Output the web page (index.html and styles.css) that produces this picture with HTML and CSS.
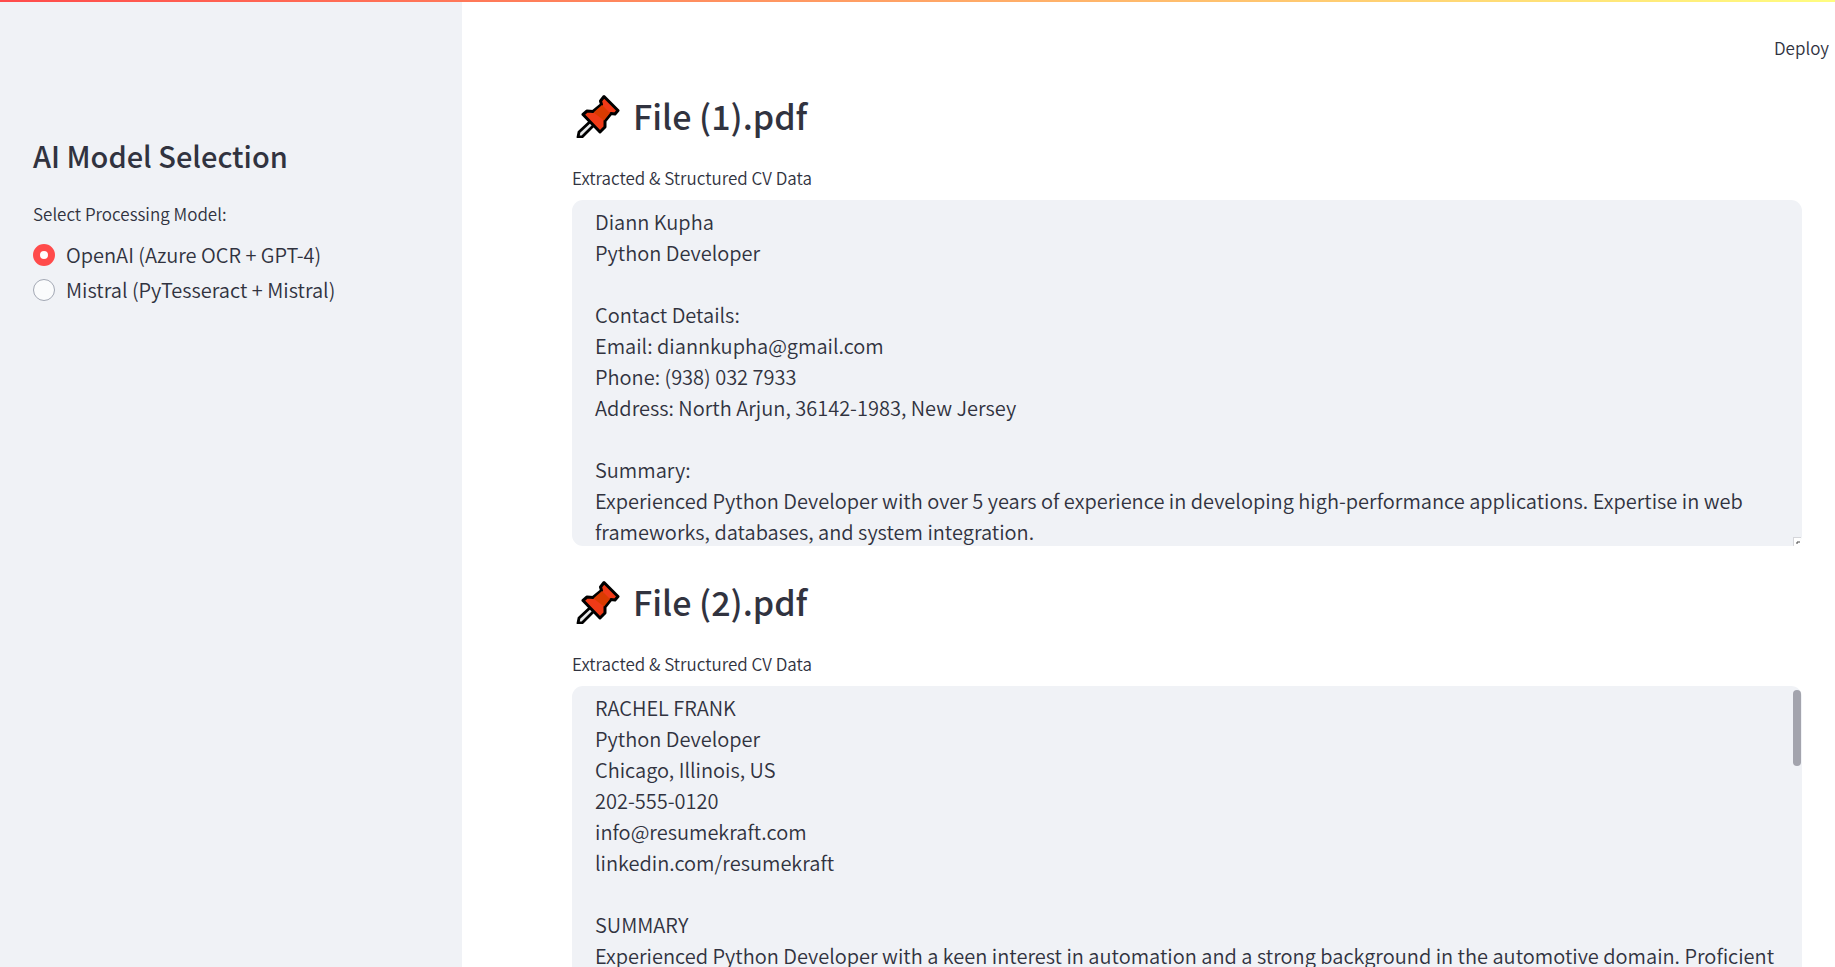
FILE: index.html
```html
<!DOCTYPE html>
<html lang="en">
<head>
<meta charset="utf-8">
<title>CV Extraction</title>
<link rel="stylesheet" href="styles.css">
</head>
<body>
<svg class="defs" aria-hidden="true">
  <symbol id="pin" viewBox="0 0 44 44">
    <path d="M18 24 L3 38 L2 43 L6 43 L21 28" fill="#e6e7e8" stroke="#000" stroke-width="2.8" stroke-linejoin="round"/>
    <path d="M28 2.500 L24.500 7 L25.500 10.500 L17 17.500 L11 17 L7 20.500 L24 38 L29 33 L29 27 L35 19.500 L39 20 L42 16.500 Z" fill="#f03a17" stroke="#000" stroke-width="3" stroke-linejoin="round"/>
    <path d="M26 11 L34 19 L28 26.500 L17.500 18.500 Z" fill="#da3b01"/>
  </symbol>
</svg>
<div class="decoration"></div>
<div class="app">
  <aside class="sidebar">
    <h2 class="sidebar-title">AI Model Selection</h2>
    <fieldset class="models">
      <legend class="caption">Select Processing Model:</legend>
      <label class="option"><input class="radio" type="radio" name="model" checked>OpenAI (Azure OCR + GPT-4)</label>
      <label class="option"><input class="radio" type="radio" name="model">Mistral (PyTesseract + Mistral)</label>
    </fieldset>
  </aside>
  <main class="main">
    <header class="toolbar"><button class="deploy" type="button">Deploy</button></header>
    <section class="file">
      <h1 class="file-title"><svg class="pin" aria-hidden="true"><use href="#pin"/></svg>File (1).pdf</h1>
      <label class="caption" for="cv1">Extracted &amp; Structured CV Data</label>
      <div class="field">
<textarea class="data" id="cv1" spellcheck="false">
Diann Kupha
Python Developer

Contact Details:
Email: diannkupha@gmail.com
Phone: (938) 032 7933
Address: North Arjun, 36142-1983, New Jersey

Summary:
Experienced Python Developer with over 5 years of experience in developing high-performance applications. Expertise in web frameworks, databases, and system integration.</textarea>
        <span class="grip"><svg class="grip-mark" viewBox="0 0 8 8" aria-hidden="true"><path d="M2 5h2M3 4h3" stroke="#444" stroke-width="1"/></svg></span>
      </div>
    </section>
    <section class="file">
      <h1 class="file-title"><svg class="pin" aria-hidden="true"><use href="#pin"/></svg>File (2).pdf</h1>
      <label class="caption" for="cv2">Extracted &amp; Structured CV Data</label>
      <div class="field">
<textarea class="data" id="cv2" spellcheck="false">
RACHEL FRANK
Python Developer
Chicago, Illinois, US
202-555-0120
info@resumekraft.com
linkedin.com/resumekraft

SUMMARY
Experienced Python Developer with a keen interest in automation and a strong background in the automotive domain. Proficient</textarea>
        <span class="thumb"></span>
      </div>
    </section>
  </main>
</div>
</body>
</html>
```
FILE: styles.css
```css
* { box-sizing: border-box; }

body {
  margin: 0;
  height: 100vh;
  overflow: hidden;
  background: #fff;
  color: #31333f;
  font-family: "Noto Sans CJK SC", "Noto Sans", sans-serif;
  font-size: 20px;
  font-weight: 350;
  line-height: 31px;
}

.defs { position: absolute; width: 0; height: 0; }

.decoration {
  position: absolute;
  top: 0;
  left: 0;
  right: 0;
  height: 2px;
  background: linear-gradient(90deg, #ff4b4b, #fffd80);
}

.app { display: flex; height: 100%; }

.sidebar {
  flex: 0 0 462px;
  padding: 134px 33px 0;
  background: #f0f2f6;
}

.sidebar-title {
  margin: 0 0 24px;
  font-size: 29px;
  font-weight: 500;
  line-height: 42px;
}

.models {
  display: flex;
  flex-direction: column;
  margin: 0;
  padding: 0;
  border: 0;
}

.caption {
  display: block;
  padding: 0;
  font-size: 17px;
  line-height: 28px;
}

.option {
  display: flex;
  align-items: center;
  gap: 11px;
  height: 35px;
}

.models .caption { margin-bottom: 9px; }

.radio {
  appearance: none;
  width: 22px;
  height: 22px;
  margin: 0;
  border: 1px solid #a3a8b4;
  border-radius: 50%;
  background: #fafbfc;
}

.radio:checked { border: 7px solid #ff4b4b; background: #fff; }

.main {
  flex: 1;
  min-width: 0;
  overflow: hidden;
}

.toolbar {
  display: flex;
  justify-content: flex-end;
  padding: 36px 6px 0;
}

.deploy {
  padding: 0;
  border: 0;
  background: none;
  color: inherit;
  font: inherit;
  font-size: 17px;
  line-height: 24px;
}

.file { padding: 30px 33px 0 110px; }

.file-title {
  display: flex;
  align-items: center;
  gap: 13px;
  margin: 0;
  padding: 0 0 22px 4px;
  font-size: 34px;
  font-weight: 500;
  line-height: 52px;
}

.pin { width: 44px; height: 44px; }

.field {
  position: relative;
  margin-top: 8px;
}

.data {
  display: block;
  width: 100%;
  height: 346px;
  padding: 6px 12px 5px 23px;
  border: 0;
  border-radius: 11px;
  outline: 0;
  resize: none;
  overflow: hidden;
  background: #f0f2f6;
  color: inherit;
  font: inherit;
}

.grip {
  position: absolute;
  right: 1px;
  bottom: 0;
  width: 8px;
  height: 9px;
  border-top: 1px solid #d5d6da;
  border-left: 1px solid #d5d6da;
  border-bottom-right-radius: 11px;
  background: #fff;
}

.grip-mark { display: block; width: 8px; height: 8px; }

.thumb {
  position: absolute;
  top: 4px;
  right: 1px;
  width: 8px;
  height: 76px;
  border-radius: 4px;
  background: #a3a4ad;
}
```
